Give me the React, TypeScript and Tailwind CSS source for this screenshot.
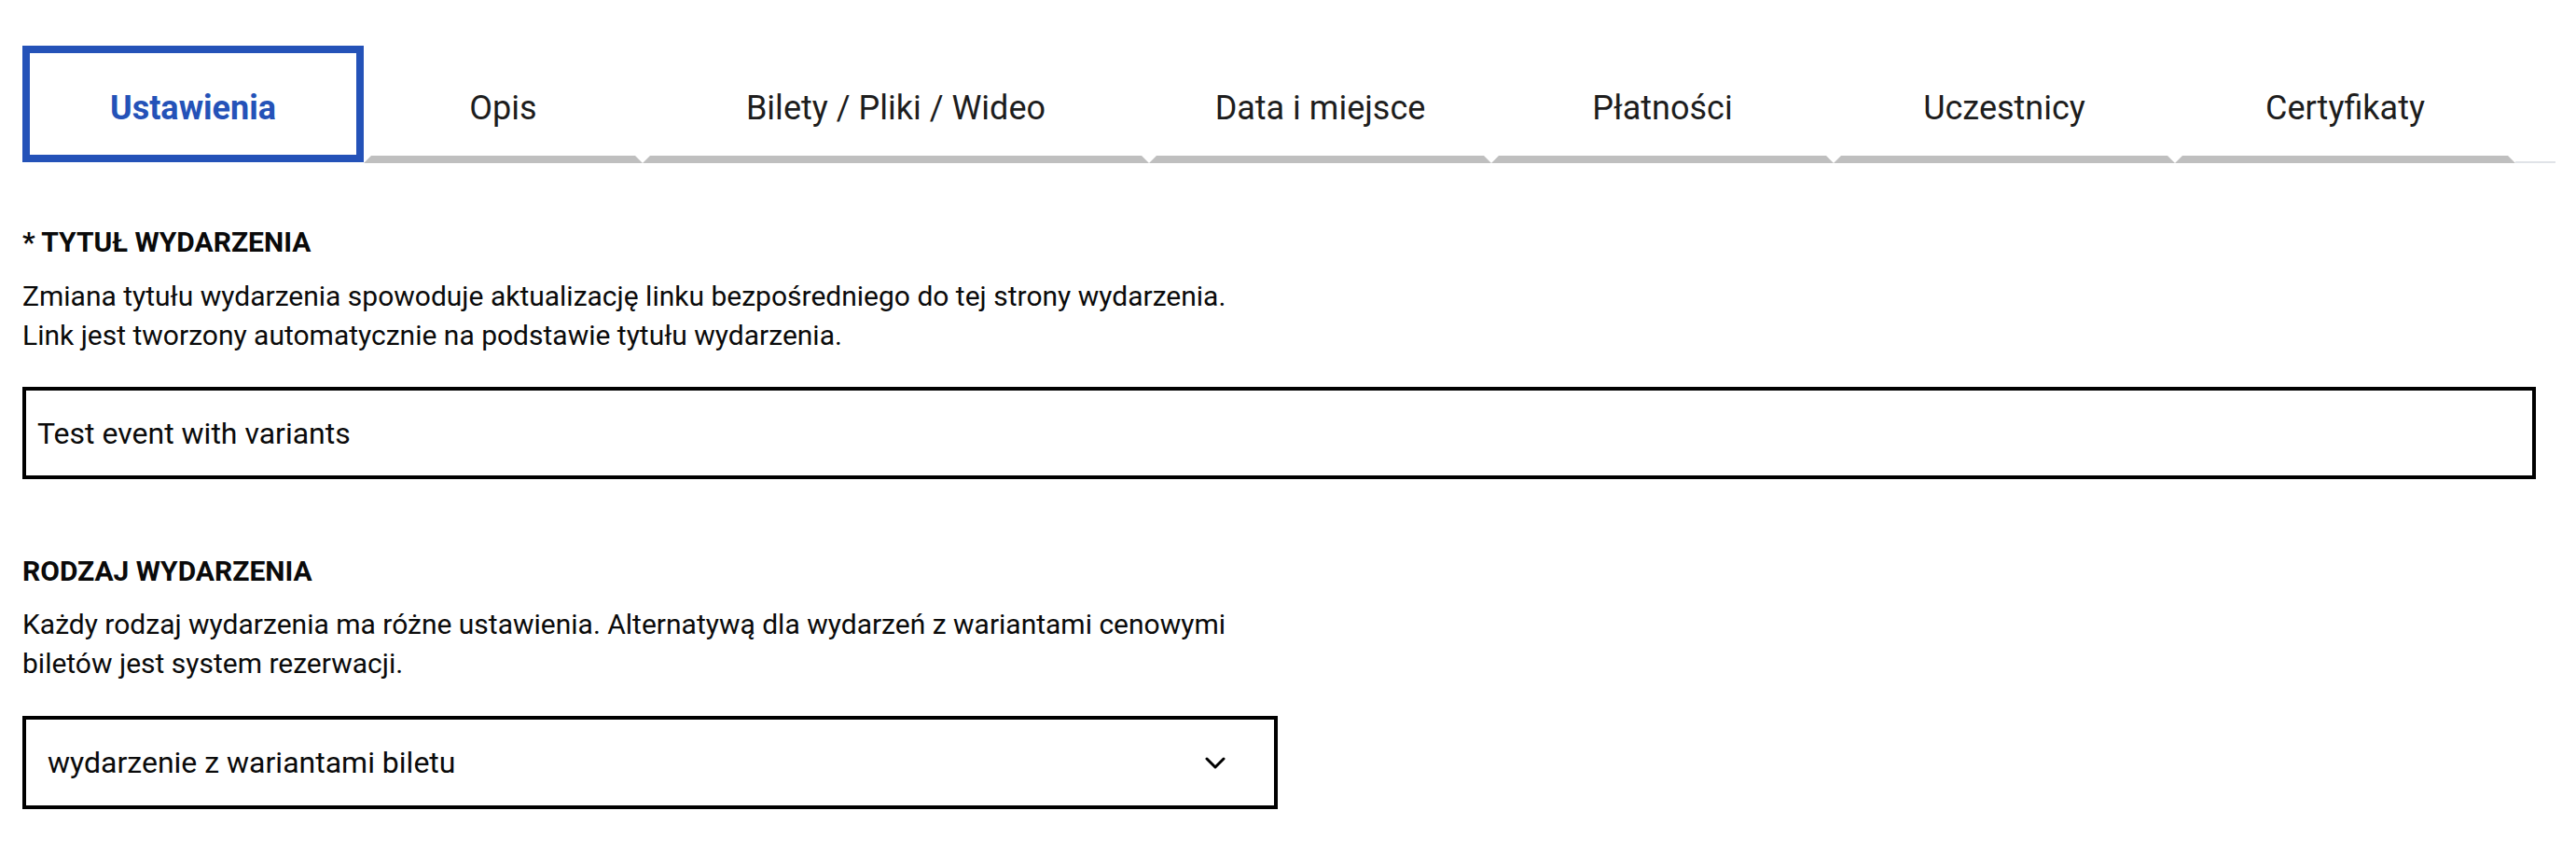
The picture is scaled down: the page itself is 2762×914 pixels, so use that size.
import React from "react";

const tabs = [
  { label: "Opis", w: "w-[299px]" },
  { label: "Bilety / Pliki / Wideo", w: "w-[543px]" },
  { label: "Data i miejsce", w: "w-[367px]" },
  { label: "Płatności", w: "w-[367px]" },
  { label: "Uczestnicy", w: "w-[366px]" },
  { label: "Certyfikaty", w: "w-[365px]" },
];

function Tab({ label, w }: { label: string; w: string }) {
  return (
    <div className={`${w} h-[126px] flex flex-col shrink-0`}>
      <div className="pt-[47px] text-center text-[36px] leading-[40px] text-[#1d1d1d]">{label}</div>
      <div className="mt-auto h-0 w-full border-b-[8px] border-x-[8px] border-x-transparent border-b-[#bfbfbf]" />
    </div>
  );
}

export default function App() {
  return (
    <div className="w-[2762px] h-[914px] bg-white font-['Roboto','Liberation_Sans',sans-serif] text-[#0a0a0a]">
      <div className="pl-[24px] pt-[49px]">
        <div className="flex items-end w-[2716px]">
          <div className="w-[366px] h-[125px] mb-[1px] shrink-0 border-[8px] border-[#2452b8] pt-[39px] text-center text-[36px] leading-[40px] font-bold text-[#2452b8]">
            Ustawienia
          </div>
          {tabs.map((t) => (
            <Tab key={t.label} label={t.label} w={t.w} />
          ))}
          <div className="flex-1 h-[2px] bg-[#e0e3e8]" />
        </div>

        <div className="mt-[64px] w-[2695px]">
          <div className="text-[30px] leading-[42px] font-bold">* TYTUŁ WYDARZENIA</div>
          <div className="mt-[16px] text-[30px] leading-[42px]">
            <div className="whitespace-nowrap">Zmiana tytułu wydarzenia spowoduje aktualizację linku bezpośredniego do tej strony wydarzenia.</div>
            <div className="whitespace-nowrap">Link jest tworzony automatycznie na podstawie tytułu wydarzenia.</div>
          </div>
          <div className="mt-[34px] h-[99px] w-[2695px] border-[4px] border-black flex items-center pl-[12px] text-[32px]">
            Test event with variants
          </div>

          <div className="mt-[78px] text-[30px] leading-[42px] font-bold">RODZAJ WYDARZENIA</div>
          <div className="mt-[15px] text-[30px] leading-[42px]">
            <div className="whitespace-nowrap">Każdy rodzaj wydarzenia ma różne ustawienia. Alternatywą dla wydarzeń z wariantami cenowymi</div>
            <div className="whitespace-nowrap">biletów jest system rezerwacji.</div>
          </div>
          <div className="mt-[35px] h-[100px] w-[1346px] border-[4px] border-black flex items-center justify-between pl-[23px] pr-[52px] text-[32px]">
            <span>wydarzenie z wariantami biletu</span>
            <svg width="22" height="13" viewBox="0 0 22 13" fill="none">
              <path d="M2 2l9 9 9-9" stroke="#000" strokeWidth="3" strokeLinecap="round" strokeLinejoin="round" />
            </svg>
          </div>
        </div>
      </div>
    </div>
  );
}
